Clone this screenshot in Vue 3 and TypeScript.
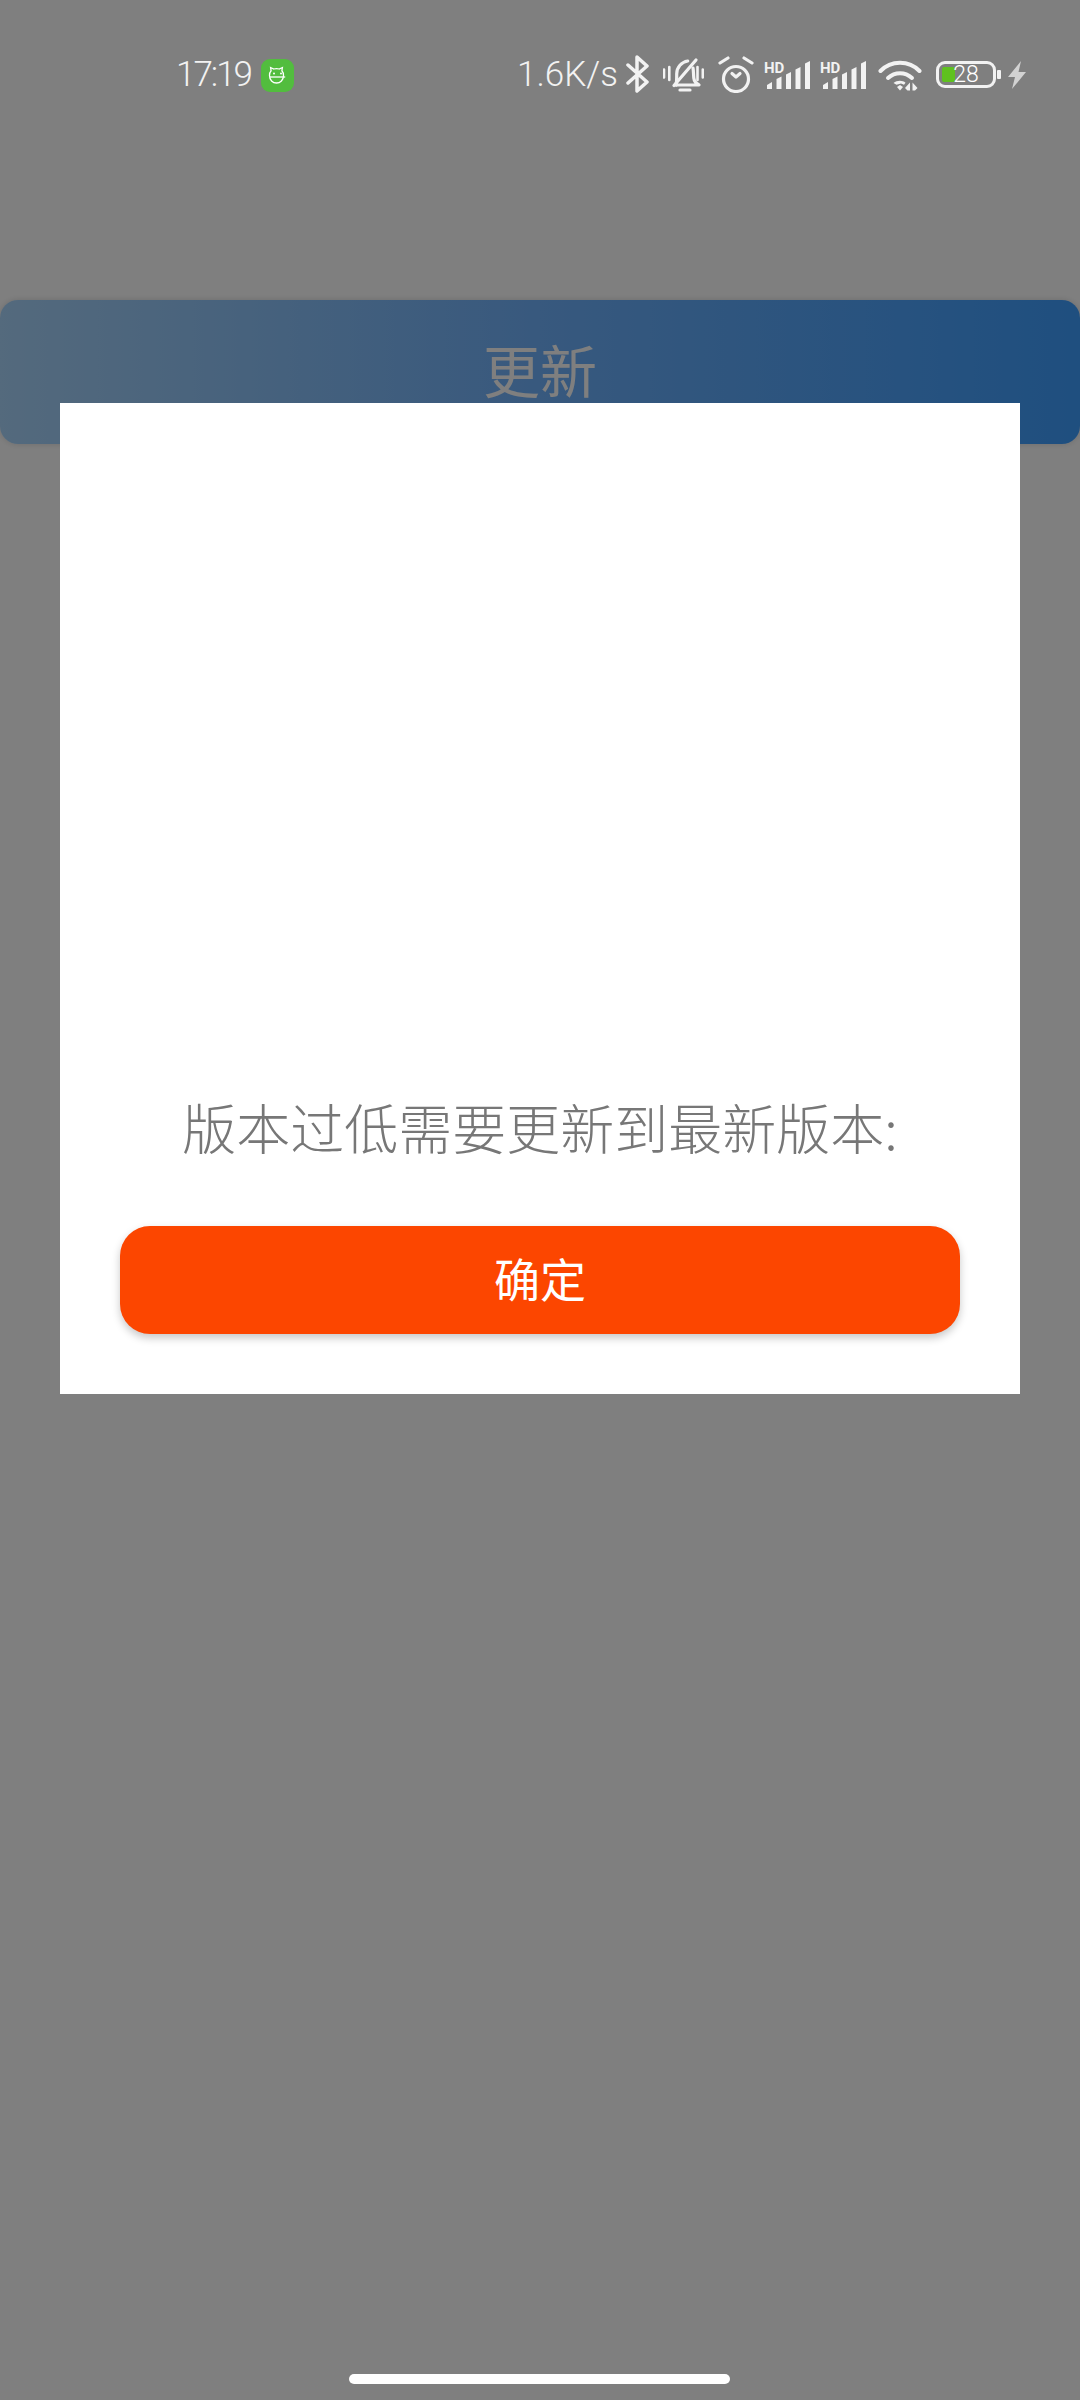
<script setup lang="ts">
// slanted tops, same as the phone's signal glyph
const barPaths: string[] = [
  'M1 28v-4l5-3v7z',
  'M10.500 28V18l5-2.500V28z',
  'M20 28V13.500l5-2.500v17z',
  'M29.500 28V8.500l5-2.500v22z',
  'M39 28V2.500L44 0v28z',
]
</script>

<template>
  <div class="page">
    <div class="header"><span class="header-title">更新</span></div>

    <div class="overlay">
      <div class="dialog">
        <p class="dialog-msg">版本过低需要更新到最新版本:</p>
        <button class="dialog-btn">确定</button>
      </div>
    </div>

    <div class="statusbar">
      <div class="status-left">
        <span class="time">17:19</span>
        <svg class="app-badge" width="33" height="33" viewBox="0 0 33 33">
          <rect width="33" height="33" rx="9" fill="#52bd3e" />
          <path
            d="M8.500 16.500c0-2 .6-3.600 1.600-4.700l-.5-3.300 3.200 1.500c1.800-.6 3.600-.6 5.400 0l3.200-1.500-.5 3.300c1 1.100 1.600 2.700 1.600 4.700 0 4.500-3.200 7.500-7 7.500s-7-3-7-7.500z"
            fill="none"
            stroke="#fff"
            stroke-width="1.300"
          />
          <path d="M8.800 18h15.400" stroke="#fff" stroke-width="1.300" />
          <circle cx="13" cy="14.500" r="1" fill="#fff" />
          <circle cx="20" cy="14.500" r="1" fill="#fff" />
        </svg>
      </div>

      <div class="status-right">
        <span class="speed">1.6K/s</span>

        <svg class="ic-bt" width="23" height="38" viewBox="0 0 23 38">
          <path
            d="M2 10l19 17-10 9V2l10 9L2 28"
            fill="none"
            stroke="#f2f2f2"
            stroke-width="3.500"
            stroke-linejoin="round"
            stroke-linecap="round"
          />
        </svg>

        <svg class="ic-bell" width="41" height="37" viewBox="0 0 41 37">
          <g fill="none" stroke="#f2f2f2" stroke-width="3.200" stroke-linecap="round" stroke-linejoin="round">
            <path d="M13 28c.8-3 .7-7 .7-11 0-7 5-12 11-13" />
            <path d="M30 11c.6 3 .4 6 .8 10 .3 3 2.500 5.500 5.200 7H13" />
            <path d="M11 28.500L33 3" />
            <path d="M1 12.500v8M6.300 10v13M34.500 10v13M39.800 12.500v8" stroke-width="2.600" />
            <path d="M17 33h10" />
          </g>
        </svg>

        <svg class="ic-alarm" width="36" height="37" viewBox="0 0 36 37">
          <g fill="none" stroke="#f2f2f2" stroke-width="3.200" stroke-linecap="round" stroke-linejoin="round">
            <circle cx="18" cy="23" r="12.500" />
            <path d="M14 17.500l4 3.500 4-3.500" />
            <path d="M2 7l8-5M34 7l-8-5" />
          </g>
        </svg>

        <div class="signal">
          <span class="hd">HD</span>
          <svg width="44" height="28" viewBox="0 0 44 28" class="bars">
            <path v-for="d in barPaths" :key="d" :d="d" fill="#f2f2f2" />
          </svg>
        </div>
        <div class="signal">
          <span class="hd">HD</span>
          <svg width="44" height="28" viewBox="0 0 44 28" class="bars">
            <path v-for="d in barPaths" :key="d" :d="d" fill="#f2f2f2" />
          </svg>
        </div>

        <svg class="ic-wifi" width="44" height="31" viewBox="0 0 44 31">
          <g fill="none" stroke="#f2f2f2" stroke-width="4" stroke-linecap="round">
            <path d="M2.500 11C13 0 31 0 41.500 11" />
            <path d="M10 18c7-6.500 17-6.500 24 0" />
          </g>
          <path d="M15.500 23c3.500-3 9-3 12 -.3l-1.500 2-3 -1.200-4.500 1.200z" fill="#f2f2f2" />
          <path d="M19 27l3-2 3 2-3 3.500z" fill="#f2f2f2" />
          <path d="M32 22.500v8h-2.500l-2.500-2.500zM34.500 22.500v8H37l2.500-2.500z" fill="#f2f2f2" />
        </svg>

        <div class="battery">
          <div class="battery-fill"></div>
          <span class="battery-num">28</span>
          <div class="battery-nub"></div>
        </div>

        <svg class="ic-bolt" width="18" height="28" viewBox="0 0 18 28">
          <path d="M13 0L0 16h7L4 28l14-17h-7.500z" fill="#d2d2d2" />
        </svg>
      </div>
    </div>

    <div class="home-bar"></div>
  </div>
</template>

<style>
html,
body {
  margin: 0;
  background: #fff;
}
</style>

<style scoped>
.page {
  position: relative;
  width: 1080px;
  height: 2400px;
  overflow: hidden;
  background: #fff;
  padding-top: 300px;
  box-sizing: border-box;
  font-family: "Noto Sans CJK SC", sans-serif;
}
.header {
  height: 144px;
  border-radius: 18px;
  background: linear-gradient(90deg, #a8d4fa 0%, #70b2fc 50%, #3e9eff 100%);
  display: flex;
  justify-content: center;
  padding-top: 26px;
  box-sizing: border-box;
  box-shadow: 0 0 6px rgba(0, 0, 0, 0.15);
}
.header-title {
  color: #fff;
  font-size: 57px;
  line-height: 84px;
  font-weight: 400;
}
.overlay {
  position: absolute;
  inset: 0;
  background: rgba(0, 0, 0, 0.5);
  padding-top: 403px;
  box-sizing: border-box;
}
.dialog {
  width: 960px;
  height: 991px;
  margin: 0 auto;
  background: #fff;
  padding: 0 60px 60px;
  box-sizing: border-box;
  display: flex;
  flex-direction: column;
  justify-content: flex-end;
}
.dialog-msg {
  margin: 0 0 57px;
  text-align: center;
  color: #777;
  font-size: 54px;
  line-height: 84px;
  font-weight: 300;
}
.dialog-btn {
  height: 108px;
  border: none;
  border-radius: 30px;
  background: #fc4600;
  color: #fff;
  font-family: inherit;
  font-size: 46px;
  box-shadow: 0 4px 8px rgba(0, 0, 0, 0.22);
  padding: 0 0 6px;
}
.statusbar {
  position: absolute;
  top: 0;
  left: 0;
  width: 1080px;
  height: 150px;
  display: flex;
  justify-content: space-between;
  align-items: flex-start;
  padding: 55px 54px 0 176px;
  box-sizing: border-box;
  color: #f2f2f2;
  font-family: Roboto, sans-serif;
  font-weight: 300;
}
.status-left,
.status-right {
  display: flex;
  align-items: flex-start;
}
.time,
.speed {
  font-size: 35px;
  line-height: 40px;
}
.time {
  letter-spacing: -2px;
}
.app-badge {
  margin: 4px 0 0 10px;
}
.ic-bt {
  margin-left: 8px;
}
.ic-bell {
  margin: 2px 0 0 14px;
}
.ic-alarm {
  margin: 1px 0 0 14px;
}
.signal {
  position: relative;
  width: 44px;
  height: 28px;
  margin: 6px 0 0 12px;
}
.hd {
  position: absolute;
  left: -2px;
  top: 0;
  font-size: 15px;
  line-height: 15px;
  font-weight: 700;
}
.bars {
  display: block;
}
.ic-wifi {
  margin: 5px 0 0 12px;
}
.battery {
  position: relative;
  width: 60px;
  height: 27px;
  margin: 6px 0 0 14px;
  border: 3px solid #f2f2f2;
  border-radius: 9px;
  box-sizing: border-box;
  display: flex;
  align-items: center;
  justify-content: center;
}
.battery-fill {
  position: absolute;
  left: 3px;
  top: 3px;
  width: 13px;
  height: 15px;
  border-radius: 2px;
  background: #5fc11f;
}
.battery-num {
  position: relative;
  font-size: 23px;
  line-height: 21px;
  color: #fff;
}
.battery-nub {
  position: absolute;
  right: -8px;
  top: 6px;
  width: 4px;
  height: 9px;
  border-radius: 1px;
  background: #f2f2f2;
}
.ic-bolt {
  margin: 6px 0 0 12px;
}
.home-bar {
  position: absolute;
  left: 349px;
  top: 2374px;
  width: 381px;
  height: 10px;
  border-radius: 5px;
  background: #fff;
}
</style>
